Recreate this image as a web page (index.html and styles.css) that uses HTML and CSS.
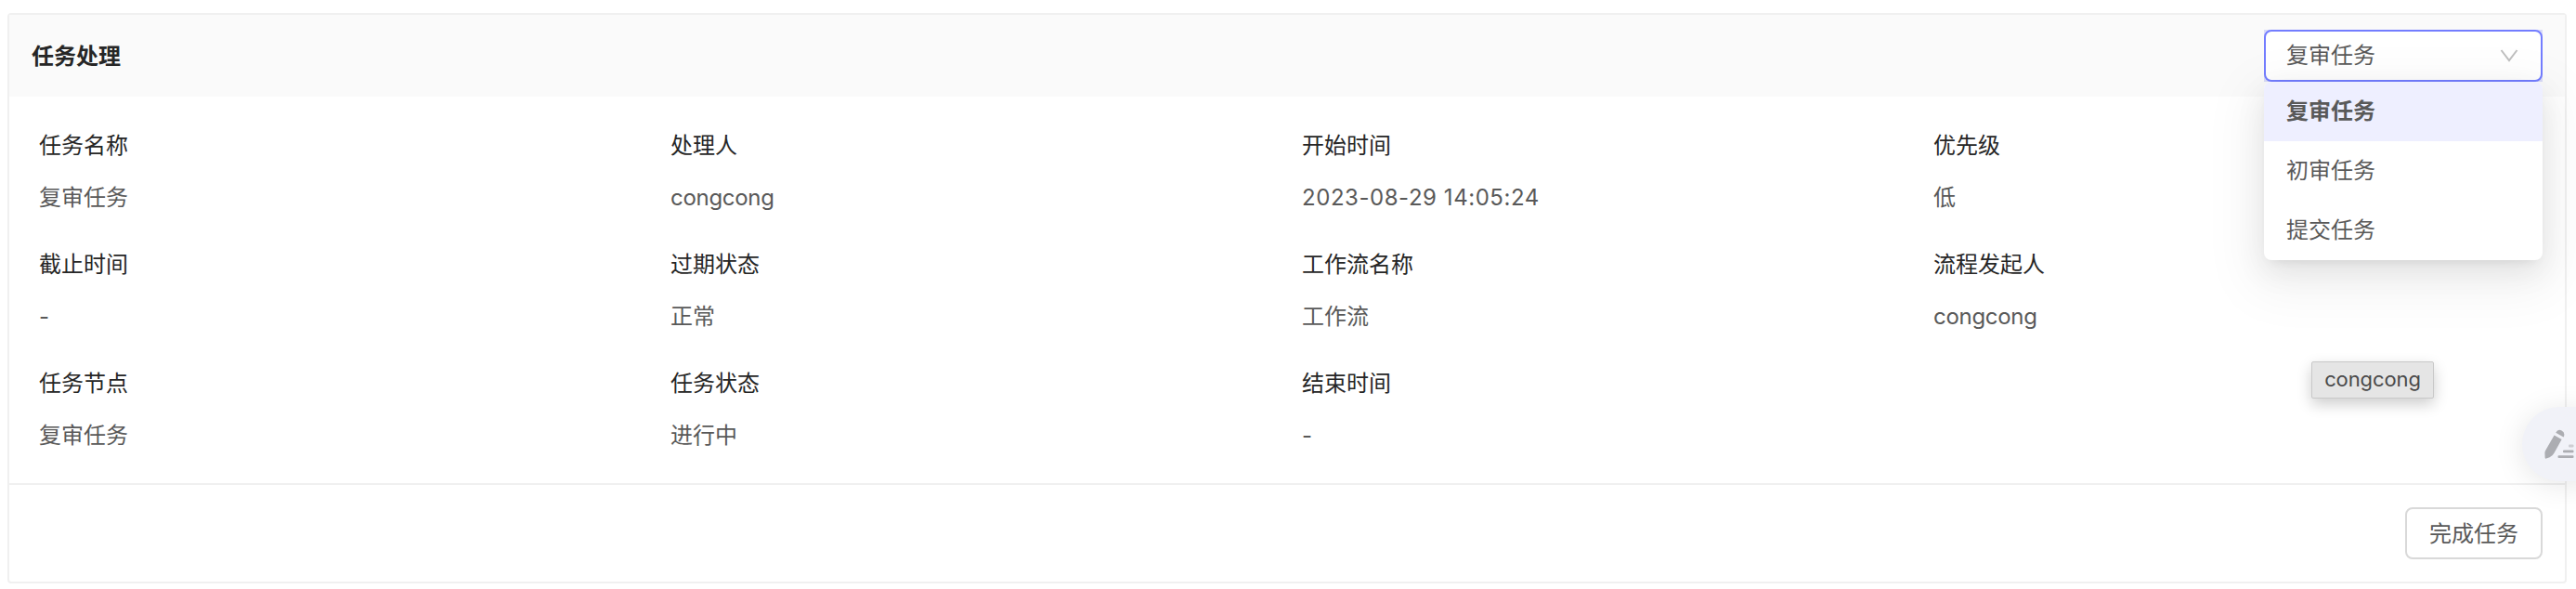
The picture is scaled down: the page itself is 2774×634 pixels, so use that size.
FILE: index.html
```html
<!DOCTYPE html>
<html lang="zh-CN">
<head>
  <meta charset="UTF-8">
  <title>任务处理</title>
  <link rel="stylesheet" href="styles.css">
</head>
<body>
  <div class="card">
    <div class="card-header">
      <div class="card-title">任务处理</div>
      <div class="select">
        <div class="select-box">
          <span>复审任务</span>
          <svg class="arrow" width="20" height="14" viewBox="0 0 20 14">
            <path d="M1.5 1 L10 12.2 L18.5 1" fill="none" stroke="#bfbfbf" stroke-width="2"/>
          </svg>
        </div>
        <div class="dropdown">
          <div class="option selected">复审任务</div>
          <div class="option">初审任务</div>
          <div class="option">提交任务</div>
        </div>
      </div>
    </div>
    <div class="info">
      <div class="item">
        <div class="label">任务名称</div>
        <div class="value">复审任务</div>
      </div>
      <div class="item">
        <div class="label">处理人</div>
        <div class="value user">congcong</div>
      </div>
      <div class="item">
        <div class="label">开始时间</div>
        <div class="value time">2023-08-29 14:05:24</div>
      </div>
      <div class="item">
        <div class="label">优先级</div>
        <div class="value">低</div>
      </div>
      <div class="item">
        <div class="label">截止时间</div>
        <div class="value">-</div>
      </div>
      <div class="item">
        <div class="label">过期状态</div>
        <div class="value">正常</div>
      </div>
      <div class="item">
        <div class="label">工作流名称</div>
        <div class="value">工作流</div>
      </div>
      <div class="item">
        <div class="label">流程发起人</div>
        <div class="value user">congcong</div>
      </div>
      <div class="item">
        <div class="label">任务节点</div>
        <div class="value">复审任务</div>
      </div>
      <div class="item">
        <div class="label">任务状态</div>
        <div class="value">进行中</div>
      </div>
      <div class="item">
        <div class="label">结束时间</div>
        <div class="value">-</div>
      </div>
    </div>
    <div class="card-footer">
      <button class="btn">完成任务</button>
    </div>
  </div>

  <div class="tooltip">congcong</div>

  <div class="float-btn">
    <svg width="32" height="32" viewBox="0 0 32 32">
      <g fill="#acadb2">
        <path d="M10.6 6.4 L18.6 11 L10.4 25.8 Q8.8 29 5.6 30.2 L2 31.6 Q0.6 32 0.6 30.6 L0.4 25.4 Q0.5 24 1.2 22.8 Z"/>
        <path d="M12.2 3.8 Q14.6 -0.6 18.6 1.6 Q22.8 4 20.6 8.6 Z"/>
        <rect x="14.5" y="28.2" width="17" height="2.8" rx="1"/>
        <rect x="20" y="22.4" width="11.5" height="2.8" rx="1"/>
      </g>
      <rect x="26" y="16.6" width="5.5" height="2.8" rx="1" fill="#ceced3"/>
    </svg>
  </div>
</body>
</html>
```

FILE: styles.css
```css
* { box-sizing: border-box; margin: 0; padding: 0; }
html {
  overflow: hidden;
}
body {
  width: 2774px;
  height: 634px;
  padding: 14px 10px 6px 8px;
  position: relative;
  overflow: hidden;
  background: #fff;
  font-family: Inter, "Noto Sans CJK SC", sans-serif;
  font-size: 24px;
  color: #595959;
}
/* 卡片 */
.card {
  height: 614px;
  border: 2px solid #f0f0f0;
  border-radius: 4px;
  display: flex;
  flex-direction: column;
}
.card-header {
  height: 88px;
  padding: 0 24px;
  background: #fafafa;
  display: flex;
  justify-content: space-between;
  align-items: center;
}
.card-title {
  line-height: 44px;
  padding-top: 2px;
  font-weight: 600;
  color: #262626;
}
/* 下拉选择 */
.select {
  position: relative;
  width: 300px;
  background: #d9dbf8;
}
.select-box {
  height: 56px;
  line-height: 52px;
  padding: 0 24px 0 22px;
  border: 2px solid #737dff;
  border-radius: 8px;
  background: #fff;
  display: flex;
  justify-content: space-between;
  align-items: center;
}
.dropdown {
  position: absolute;
  top: 56px;
  left: 0;
  width: 100%;
  background: #fff;
  border-radius: 8px;
  overflow: hidden;
  box-shadow: 0 6px 12px -8px rgba(0,0,0,0.12), 0 12px 32px rgba(0,0,0,0.08), 0 18px 56px 16px rgba(0,0,0,0.05);
}
.option {
  height: 64px;
  line-height: 64px;
  padding: 0 24px;
}
.option.selected {
  background: #eeefff;
  font-weight: 700;
}
/* 任务信息 */
.info {
  flex: 1;
  padding: 31px 0 0 32px;
  display: grid;
  grid-template-columns: repeat(4, 680px);
  grid-auto-rows: 100px;
  row-gap: 28px;
}
.item {
  display: flex;
  flex-direction: column;
  gap: 12px;
}
.label, .value {
  height: 44px;
  line-height: 44px;
}
.label {
  color: #262626;
}
.user {
  letter-spacing: -0.3px;
}
.time {
  letter-spacing: 0.55px;
}
/* 底部按钮 */
.card-footer {
  height: 106px;
  padding: 0 24px;
  border-top: 2px solid #f0f0f0;
  display: flex;
  justify-content: flex-end;
  align-items: center;
}
.btn {
  width: 148px;
  height: 56px;
  padding-top: 2px;
  border: 2px solid #d9d9d9;
  border-radius: 8px;
  background: #fff;
  font: inherit;
  line-height: 44px;
  color: #595959;
}
/* 提示框 */
.tooltip {
  position: absolute;
  left: 2489px;
  top: 389px;
  width: 132px;
  height: 40px;
  line-height: 36px;
  text-align: center;
  font-size: 22px;
  letter-spacing: -0.1px;
  color: #4a4a4a;
  background: #e5e5e5;
  border: 1px solid #c8c8c8;
  border-radius: 2px;
  box-shadow: 0 6px 16px rgba(0,0,0,0.2);
}
/* 悬浮按钮 */
.float-btn {
  position: absolute;
  left: 2716px;
  top: 438px;
  width: 96px;
  height: 80px;
  padding: 24px 0 0 24px;
  background: #f1f2f8;
  border-radius: 40px;
  box-shadow: 0 4px 32px rgba(0,0,0,0.1);
}
.float-btn svg {
  display: block;
}
```
